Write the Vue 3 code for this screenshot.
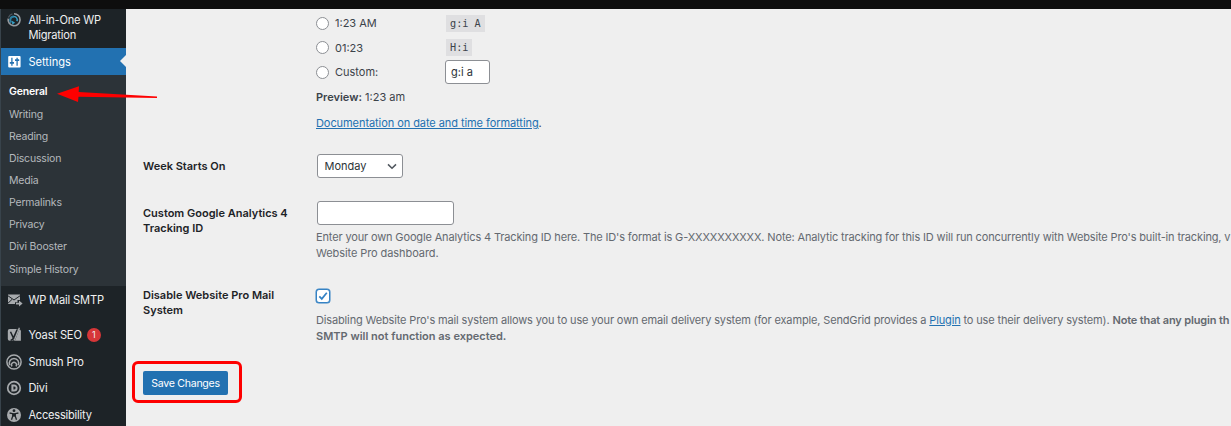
<script setup>
const submenu = ['General', 'Writing', 'Reading', 'Discussion', 'Media', 'Permalinks', 'Privacy', 'Divi Booster', 'Simple History']
const formats = [
  { label: '1:23 AM', code: 'g:i A' },
  { label: '01:23', code: 'H:i' },
]
</script>

<template>
  <div class="screen">
    <div class="topbar"></div>
    <div class="body">
      <nav class="sidebar">
        <div class="item migration">
          <svg class="icon" viewBox="0 0 16 16" fill="none">
            <path d="M8 1.7A6 6 0 1 1 2.2 6.6" stroke="#969ba0" stroke-width="1.6" />
            <path d="M2.4 5.4A6 6 0 0 1 6.4 1.9" stroke="#4b555e" stroke-width="1.3" />
            <path d="M5.4 10.6A3.5 3.5 0 0 1 7.8 4.5" stroke="#2d7fa0" stroke-width="2" />
            <path d="M7.4 4.8A3 3 0 0 1 10.8 9.2" stroke="#36a3cc" stroke-width="1.4" />
            <path d="M6 8.8L9.2 10.8L6.2 12.6Z" fill="#36a3cc" />
          </svg>
          <span>All-in-One WP<br />Migration</span>
        </div>
        <div class="item settings">
          <svg class="icon" viewBox="0 0 16 16">
            <rect x="2.2" y="2" width="12.4" height="11.6" rx="1" fill="#fff" />
            <path d="M5.9 3.8V11.7M11.1 3.8V11.7" stroke="#2271b1" stroke-width="1.3" />
            <path d="M3.8 8.8H8M9 6.1H13.2" stroke="#2271b1" stroke-width="1.7" />
          </svg>
          <span>Settings</span>
          <i class="notch"></i>
        </div>
        <ul class="submenu">
          <li v-for="(name, i) in submenu" :key="name" :class="{ current: i === 0 }"><span>{{ name }}</span></li>
        </ul>
        <div class="item mail">
          <svg class="icon" viewBox="0 0 16 16" fill="none">
            <path d="M2 2.5H14V8H11.5V10.2H9V12H2Z" fill="#a7aaad" />
            <path d="M2 3.8L8 8L14 3.8M2 11.2L6 7.4" stroke="#1d2327" stroke-width="1" />
            <path d="M10 10.7H13V8.6L16.6 11.6L13 14.6V12.6H10Z" fill="#a7aaad" />
          </svg>
          <span>WP Mail SMTP</span>
        </div>
        <div class="item yoast">
          <svg class="icon" viewBox="0 0 16 16" fill="none">
            <path d="M3.7 2H11.6L7 13.8H3.7Q1.8 13.8 1.8 12V4Q1.8 2 3.7 2Z" fill="#a7aaad" />
            <path d="M13.4 2.2Q14.9 2.6 14.9 4.2V13.8H8.9Z" fill="#a7aaad" />
            <path d="M4.5 4.8L7.2 10.6M11.2 2.6L7.3 11.4Q6.5 13.2 4.6 13.2" stroke="#1d2327" stroke-width="1.5" />
            <path d="M13.4 0.7L8.2 13.6" stroke="#a7aaad" stroke-width="1.3" />
          </svg>
          <span>Yoast SEO</span>
          <b class="badge">1</b>
        </div>
        <div class="item smush">
          <svg class="icon" viewBox="0 0 16 16" fill="none" stroke="#a7aaad" stroke-width="1.5">
            <circle cx="8" cy="8" r="7.1" />
            <path d="M3.8 11.2A4.7 4.7 0 1 1 12.2 11.2" />
            <path d="M6 12.4A2.5 2.5 0 1 1 10 12.4" />
          </svg>
          <span>Smush Pro</span>
        </div>
        <div class="item divi">
          <svg class="icon" viewBox="0 0 16 16" fill="none">
            <circle cx="8" cy="8" r="6.3" stroke="#a7aaad" stroke-width="1.7" />
            <path d="M6.4 5.4H8A2.6 2.6 0 0 1 8 10.6H6.4Z" stroke="#a7aaad" stroke-width="2" />
          </svg>
          <span>Divi</span>
        </div>
        <div class="item access">
          <svg class="icon" viewBox="0 0 16 16" fill="none">
            <circle cx="8" cy="8" r="7" fill="#a7aaad" />
            <circle cx="8" cy="3.7" r="1.4" fill="#1d2327" />
            <path d="M3.6 6L6.8 6.7V9L5.5 12.8M12.4 6L9.2 6.7V9L10.5 12.8" stroke="#1d2327" stroke-width="1.3" />
            <path d="M6.4 6.2H9.6V9.6H6.4Z" fill="#1d2327" />
          </svg>
          <span>Accessibility</span>
        </div>
      </nav>

      <main class="content">
        <section class="formats">
          <div v-for="f in formats" :key="f.code" class="format">
            <i class="radio"></i><span class="flabel">{{ f.label }}</span><code>{{ f.code }}</code>
          </div>
          <div class="format">
            <i class="radio"></i><span class="flabel">Custom:</span><div class="custom">g:i a</div>
          </div>
          <p class="preview"><b>Preview:</b> 1:23 am</p>
          <p class="doc"><a>Documentation on date and time formatting</a>.</p>
        </section>
        <section class="row week">
          <h4>Week Starts On</h4>
          <div class="select"><span>Monday</span>
            <svg width="10" height="7" viewBox="0 0 10 7" fill="none"><path d="M1 1.4L5 5.2L9 1.4" stroke="#50575e" stroke-width="1.5" /></svg>
          </div>
        </section>
        <section class="row tracking">
          <h4>Custom Google Analytics 4<br />Tracking ID</h4>
          <div>
            <div class="textbox"></div>
            <p class="desc"><span class="long">Enter your own Google Analytics 4 Tracking ID here. The ID's format is G-XXXXXXXXXX. Note: Analytic tracking for this ID will run concurrently with Website Pro's built-in tracking, v</span><br />Website Pro dashboard.</p>
          </div>
        </section>
        <section class="row mailsys">
          <h4>Disable Website Pro Mail<br />System</h4>
          <div>
            <div class="check">
              <svg width="10" height="10" viewBox="0 0 10 10" fill="none"><path d="M1.3 5.3L3.8 7.9L8.8 1.8" stroke="#3582c4" stroke-width="1.7" /></svg>
            </div>
            <p class="desc"><span class="long">Disabling Website Pro's mail system allows you to use your own email delivery system (for example, SendGrid provides a <a>Plugin</a> to use their delivery system). <b>Note that any plugin th</b></span><br /><b>SMTP will not function as expected.</b></p>
          </div>
        </section>
        <div class="highlight"><button>Save Changes</button></div>
      </main>
    </div>
    <svg class="arrow" width="102" height="18" viewBox="0 0 102 18">
      <path d="M0 8.7L22 1.3L21.7 7L100 11.4V13L21.5 11.8L21 16.9Z" fill="#fe0000" />
    </svg>
  </div>
</template>

<style>
body { background: #efefef; overflow: hidden; }
</style>

<style scoped>
* { box-sizing: border-box; }
.screen { position: relative; width: 1231px; height: 426px; overflow: hidden; background: #efefef; font-family: Inter, "Liberation Sans", sans-serif; font-size: 11px; color: #3c434a; white-space: nowrap; }
.topbar { height: 9px; background: #0e0e0e; }
.body { display: flex; height: 417px; }
.sidebar { width: 126px; flex: none; background: #1d2327; border-left: 1px solid #38434b; }
.item { display: flex; align-items: center; height: 27px; padding-left: 5px; color: #f0f0f1; font-size: 11.1px; letter-spacing: -.13px; position: relative; }
.icon { width: 16px; height: 16px; flex: none; margin-right: 6.4px; overflow: visible; }
.migration { height: 39px; line-height: 14.5px; align-items: flex-start; padding-top: 4px; letter-spacing: -.2px; }
.migration .icon { margin-top: -1px; }
.settings { background: #2271b1; color: #fff; letter-spacing: 0; }
.notch { position: absolute; right: 0; top: 7px; border: 6px solid transparent; border-right-color: #efefef; border-left: 0; }
.submenu { list-style: none; margin: 0; padding: 6.4px 0 0 8px; height: 211px; background: #2c3338; }
.submenu li { height: 22.15px; line-height: 22px; color: #b5b9bd; font-size: 10.5px; letter-spacing: -.18px; }
.submenu .current { color: #fff; font-weight: 600; }
.mail { letter-spacing: -.15px; }
.yoast { margin-top: 8.4px; }
.badge { width: 14px; height: 14px; margin-left: 5px; border-radius: 50%; background: #d63638; font-size: 9px; font-weight: 400; line-height: 14px; text-align: center; }
.smush, .divi { height: 26.6px; }
.access { letter-spacing: -.22px; }
.content { flex: 1; min-width: 0; padding-left: 17px; }
.formats { padding: 2px 0 0 173px; height: 140px; }
.format { display: flex; align-items: center; height: 24.6px; }
.radio { width: 13px; height: 13px; border: 1px solid #8c8f94; border-radius: 50%; background: #fff; margin-right: 6px; }
.flabel { width: 110px; }
code { font-family: "DejaVu Sans Mono", monospace; font-size: 10.2px; line-height: 17px; padding: 0 4px; margin-left: 1px; background: #dfdfe1; color: #3c434a; }
.custom { width: 45px; height: 24px; padding-left: 5px; line-height: 23px; border: 1px solid #8c8f94; border-radius: 3px; background: #fff; color: #2c3338; }
p { margin: 0; }
.preview { line-height: 16px; margin-top: 4px; }
.doc { line-height: 16px; margin-top: 10.5px; letter-spacing: -.07px; }
a { color: #2271b1; text-decoration: underline; }
b { font-weight: 600; }
.row { display: grid; grid-template-columns: 173px 1fr; }
h4 { margin: 0; font-size: 11px; line-height: 15px; font-weight: 600; color: #1d2327; }
.week { height: 52px; padding-top: 5px; }
.week h4 { padding-top: 5px; }
.select { display: flex; align-items: center; justify-content: space-between; width: 86px; height: 24px; margin-left: 1px; padding: 0 5px 0 6.5px; border: 1px solid #8c8f94; border-radius: 3px; background: #fff; color: #2c3338; font-size: 11px; }
.tracking { height: 87px; }
.tracking h4 { padding-top: 5px; }
.textbox { width: 137px; height: 24px; margin-left: 1px; border: 1px solid #8c8f94; border-radius: 3px; background: #fff; }
.desc { line-height: 16px; color: #646970; margin-top: 4px; letter-spacing: -.08px; }
.long { letter-spacing: -.145px; }
.desc > b { letter-spacing: 0; }
.mailsys { height: 74px; }
.check { display: flex; align-items: center; justify-content: center; width: 14px; height: 14px; margin-top: 1px; border: 1px solid #3582c4; border-radius: 3px; background: #fff; box-shadow: 0 0 0 .5px #3582c4; }
.mailsys .desc { margin-top: 9px; }
.highlight { display: flex; align-items: center; width: 110px; height: 42px; margin: -1px 0 0 -11px; padding: 2px 0 0 8px; border: 3px solid #fe0000; border-radius: 6px; }
button { width: 85px; height: 24px; padding: 0; border: 0; border-radius: 2px; background: #2271b1; color: #fff; font: 10.6px Inter, sans-serif; letter-spacing: -.28px; }
.arrow { position: absolute; left: 57px; top: 85px; }
</style>
